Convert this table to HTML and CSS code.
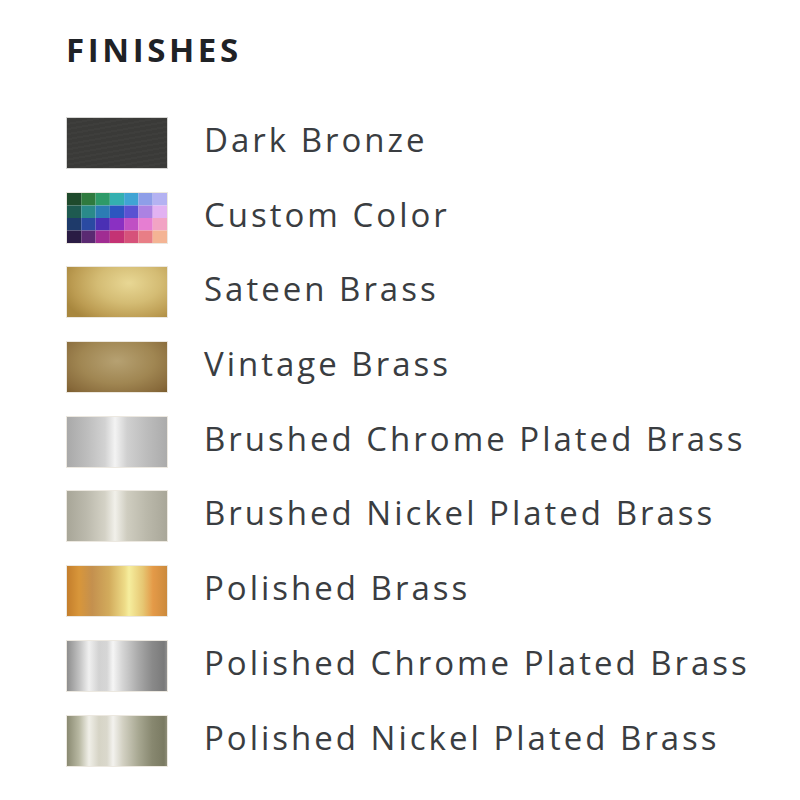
FILE: index.html
```html
<!DOCTYPE html>
<html>
<head>
<meta charset="utf-8">
<link rel="stylesheet" href="styles.css">
</head>
<body>
<div class="panel">
  <h2 class="title">FINISHES</h2>
  <ul class="list">
    <li class="row"><span class="sw sw-bronze"></span><span class="label">Dark Bronze</span></li>
    <li class="row"><span class="sw sw-custom">
      <svg width="100" height="50" viewBox="0 0 7 4" preserveAspectRatio="none">
        <rect x="0" y="0" width="1" height="1" fill="#1f4a2c"/>
        <rect x="1" y="0" width="1" height="1" fill="#2f7a3e"/>
        <rect x="2" y="0" width="1" height="1" fill="#2e9a68"/>
        <rect x="3" y="0" width="1" height="1" fill="#34b0b0"/>
        <rect x="4" y="0" width="1" height="1" fill="#40a4d4"/>
        <rect x="5" y="0" width="1" height="1" fill="#8e9ee8"/>
        <rect x="6" y="0" width="1" height="1" fill="#b4b2f2"/>
        <rect x="0" y="1" width="1" height="1" fill="#1e5a50"/>
        <rect x="1" y="1" width="1" height="1" fill="#2a8a8a"/>
        <rect x="2" y="1" width="1" height="1" fill="#2c7cb4"/>
        <rect x="3" y="1" width="1" height="1" fill="#2c56c0"/>
        <rect x="4" y="1" width="1" height="1" fill="#5a52d2"/>
        <rect x="5" y="1" width="1" height="1" fill="#ac82e2"/>
        <rect x="6" y="1" width="1" height="1" fill="#e2b2f2"/>
        <rect x="0" y="2" width="1" height="1" fill="#1e3a6a"/>
        <rect x="1" y="2" width="1" height="1" fill="#2a4aa2"/>
        <rect x="2" y="2" width="1" height="1" fill="#4a30b4"/>
        <rect x="3" y="2" width="1" height="1" fill="#8a30c2"/>
        <rect x="4" y="2" width="1" height="1" fill="#c050c4"/>
        <rect x="5" y="2" width="1" height="1" fill="#e67ed2"/>
        <rect x="6" y="2" width="1" height="1" fill="#f2a4c4"/>
        <rect x="0" y="3" width="1" height="1" fill="#2a1c44"/>
        <rect x="1" y="3" width="1" height="1" fill="#5a2a72"/>
        <rect x="2" y="3" width="1" height="1" fill="#a02c92"/>
        <rect x="3" y="3" width="1" height="1" fill="#c43274"/>
        <rect x="4" y="3" width="1" height="1" fill="#d6527a"/>
        <rect x="5" y="3" width="1" height="1" fill="#e87e86"/>
        <rect x="6" y="3" width="1" height="1" fill="#f4b494"/>
      </svg>
    </span><span class="label">Custom Color</span></li>
    <li class="row"><span class="sw sw-sateen"></span><span class="label">Sateen Brass</span></li>
    <li class="row"><span class="sw sw-vintage"></span><span class="label">Vintage Brass</span></li>
    <li class="row"><span class="sw sw-bchrome"></span><span class="label">Brushed Chrome Plated Brass</span></li>
    <li class="row"><span class="sw sw-bnickel"></span><span class="label">Brushed Nickel Plated Brass</span></li>
    <li class="row"><span class="sw sw-pbrass"></span><span class="label">Polished Brass</span></li>
    <li class="row"><span class="sw sw-pchrome"></span><span class="label">Polished Chrome Plated Brass</span></li>
    <li class="row"><span class="sw sw-pnickel"></span><span class="label">Polished Nickel Plated Brass</span></li>
  </ul>
</div>
</body>
</html>
```

FILE: styles.css
```css
html, body {
  margin: 0;
  padding: 0;
  background: #ffffff;
}

.panel {
  padding: 28px 0 0 66px;
  font-family: "Open Sans", "DejaVu Sans", sans-serif;
}

.title {
  margin: 0;
  font-size: 33px;
  font-weight: 700;
  color: #1f2226;
  letter-spacing: 3.6px;
  line-height: 44px;
}

.list {
  list-style: none;
  margin: 0;
  padding: 0;
  padding-top: 45px;
  display: flex;
  flex-direction: column;
  gap: 22.7px;
}

.row {
  display: flex;
  align-items: center;
  height: 52px;
}

.sw {
  flex: 0 0 auto;
  width: 100px;
  height: 50px;
  border: 1px solid #ece8e0;
  display: block;
  overflow: hidden;
}

.sw svg {
  display: block;
}

.label {
  margin-left: 36px;
  font-size: 33px;
  color: #3a3d41;
  letter-spacing: 3px;
  line-height: 44px;
  margin-top: -6px;
}

.sw-bronze {
  background:
    repeating-linear-gradient(170deg, rgba(255,255,255,0.015) 0 2px, rgba(0,0,0,0.02) 2px 5px),
    #3b3b39;
  border-color: #d6d6d4;
}

.sw-sateen {
  background: radial-gradient(ellipse 70% 90% at 62% 32%, #e8d794 0%, #d4bc74 45%, #bc9c52 80%, #a8873e 100%);
}

.sw-vintage {
  background: radial-gradient(ellipse 75% 90% at 50% 38%, #b6a172 0%, #a08652 50%, #87693a 85%, #765829 100%);
}

.sw-bchrome {
  background: linear-gradient(90deg, #a9a9a9 0%, #bdbdbd 20%, #d2d2d2 38%, #f3f3f3 48%, #d0d0d0 60%, #bcbcbc 80%, #ababab 100%);
}

.sw-bnickel {
  background: linear-gradient(90deg, #a8a698 0%, #bcbaad 20%, #d4d2c6 38%, #f1f0ea 48%, #cfcdc0 60%, #bab8aa 80%, #a9a799 100%);
}

.sw-pbrass {
  background: linear-gradient(90deg, #c47e2c 0%, #d8963a 12%, #c4904e 25%, #d2ab5c 42%, #eedc88 58%, #f6ee9e 62%, #e6c672 76%, #e49a48 86%, #cc8a3c 100%);
}

.sw-pchrome {
  background: linear-gradient(90deg, #8e8e8e 0%, #c0c0c0 12%, #f0f0f0 22%, #d2d2d2 32%, #d6d6d6 40%, #f5f5f5 46%, #d6d6d6 55%, #a8a8a8 72%, #8a8a8a 85%, #7a7a7a 97%, #909090 100%);
}

.sw-pnickel {
  background: linear-gradient(90deg, #8a8a72 0%, #b8b8a2 12%, #f0efe8 22%, #d6d4c6 32%, #dad8cc 40%, #f3f2ee 46%, #d2d0c2 56%, #a6a690 72%, #888870 85%, #7a7a62 97%, #8e8e78 100%);
}
```
